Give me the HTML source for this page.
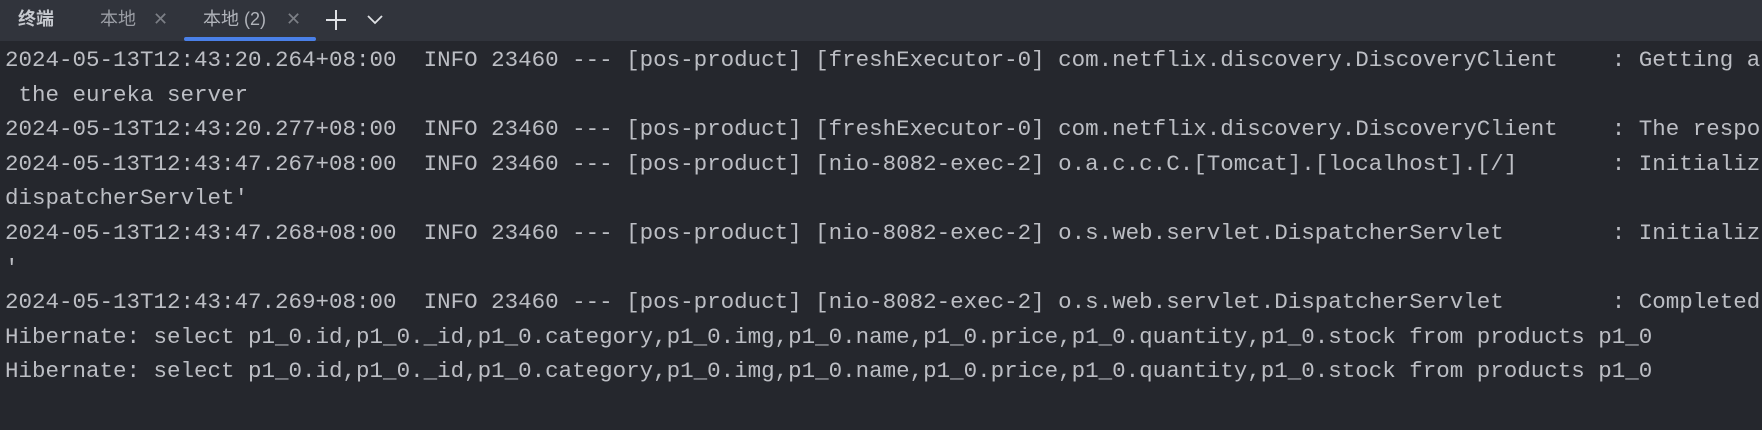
<!DOCTYPE html>
<html><head><meta charset="utf-8"><style>
body{margin:0;width:1762px;height:430px;background:#25272d;overflow:hidden;font-family:"Liberation Sans","Noto Sans CJK SC",sans-serif}
.bar{position:absolute;left:0;top:0;width:1762px;height:41px;background:#31343c}
.t{position:absolute;top:8px;font-size:18px;color:#9a9da4;line-height:22px;white-space:nowrap}
.ul{position:absolute;left:184px;top:37px;width:132px;height:4px;background:#4a80e8;border-radius:2px}
.log{position:absolute;left:5px;top:43px;font-family:"Liberation Mono",monospace;font-size:22.5px;line-height:34.6px;color:#bcbec4;white-space:pre;margin:0}
</style></head><body>
<div class="bar"></div>
<div class="t" style="left:18px;color:#c5c8ce;font-weight:bold">终端</div>
<div class="t" style="left:100px">本地</div>
<div class="t" style="left:153px;color:#7c7f86">✕</div>
<div class="t" style="left:203px;color:#b0b3ba">本地 (2)</div>
<div class="t" style="left:286px;color:#7c7f86">✕</div>
<svg style="position:absolute;left:325px;top:9px" width="22" height="22"><path d="M11 1V21M1 11H21" stroke="#dfe1e5" stroke-width="2"/></svg>
<svg style="position:absolute;left:366px;top:13px" width="18" height="12"><path d="M2 3L9 10L16 3" stroke="#dfe1e5" stroke-width="1.8" fill="none"/></svg>
<div class="ul"></div>
<pre class="log">2024-05-13T12:43:20.264+08:00  INFO 23460 --- [pos-product] [freshExecutor-0] com.netflix.discovery.DiscoveryClient    : Getting all
 the eureka server
2024-05-13T12:43:20.277+08:00  INFO 23460 --- [pos-product] [freshExecutor-0] com.netflix.discovery.DiscoveryClient    : The respo
2024-05-13T12:43:47.267+08:00  INFO 23460 --- [pos-product] [nio-8082-exec-2] o.a.c.c.C.[Tomcat].[localhost].[/]       : Initializ
dispatcherServlet'
2024-05-13T12:43:47.268+08:00  INFO 23460 --- [pos-product] [nio-8082-exec-2] o.s.web.servlet.DispatcherServlet        : Initializ
'
2024-05-13T12:43:47.269+08:00  INFO 23460 --- [pos-product] [nio-8082-exec-2] o.s.web.servlet.DispatcherServlet        : Completed
Hibernate: select p1_0.id,p1_0._id,p1_0.category,p1_0.img,p1_0.name,p1_0.price,p1_0.quantity,p1_0.stock from products p1_0
Hibernate: select p1_0.id,p1_0._id,p1_0.category,p1_0.img,p1_0.name,p1_0.price,p1_0.quantity,p1_0.stock from products p1_0</pre>
</body></html>
